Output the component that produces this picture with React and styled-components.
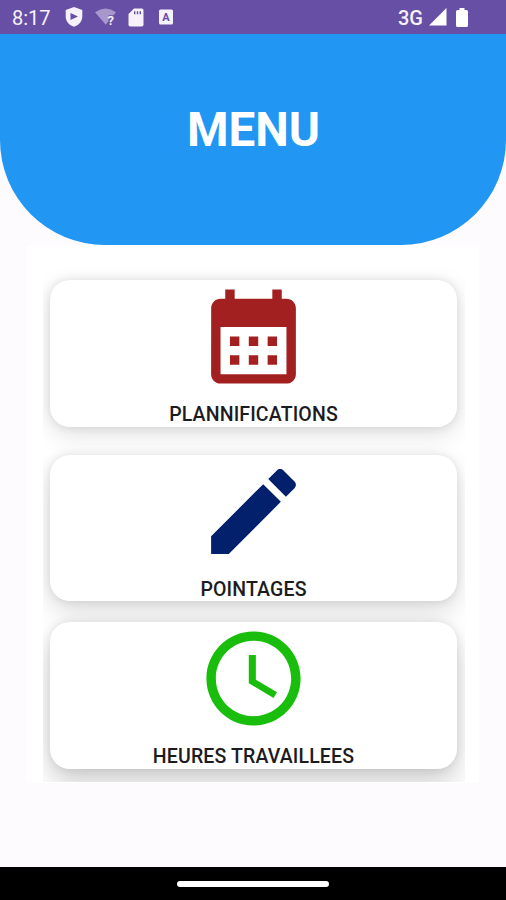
import { createGlobalStyle, styled } from "styled-components";

const GlobalStyle = createGlobalStyle`
    * {
        box-sizing: border-box;
    }
    body {
        margin: 0;
        background: #fefbff;
        font-family: Roboto, "Liberation Sans", sans-serif;
    }
`

const Screen = styled.div`
    display: flex;
    flex-direction: column;
    width: 506px;
    height: 900px;
    overflow: hidden;
    background: #fefbff;
`

const StatusBar = styled.div`
    display: flex;
    align-items: center;
    justify-content: space-between;
    flex: none;
    height: 34px;
    padding: 0 38px 0 12px;
    background: #674fa5;
    color: #f6f2fb;
`

const StatusGroup = styled.div`
    display: flex;
    align-items: center;
`

const StatusText = styled.span`
    font-size: 20px;
    font-weight: ${({ $weight }) => $weight || 400};
    line-height: 34px;
    padding-top: 2px;
`

const StatusIcon = styled.svg`
    display: block;
    flex: none;
    margin-left: ${({ $gap }) => $gap}px;
`

const Glyph = styled.text`
    font-family: Roboto, "Liberation Sans", sans-serif;
    font-weight: 700;
    font-size: ${({ $size }) => $size}px;
    text-anchor: middle;
`

const Header = styled.header`
    display: flex;
    justify-content: center;
    flex: none;
    height: 211px;
    padding-top: 68px;
    background: #2196f3;
    border-radius: 0 0 105px 105px;
`

const Title = styled.h1`
    margin: 0 0 0 1px;
    color: #fff;
    font-size: 47.5px;
    font-weight: 700;
    line-height: 56px;
`

const Panel = styled.main`
    flex: none;
    height: 538px;
    margin: 0 27px;
    padding: 0 14px 0 16px;
    background: #fff;
`

const CardList = styled.div`
    display: flex;
    flex-direction: column;
    height: 537px;
    padding: 35px 8px 0 7px;
    overflow: hidden;
`

const Card = styled.div`
    display: flex;
    flex-direction: column;
    align-items: center;
    flex: none;
    height: 146.5px;
    margin-bottom: ${({ $space }) => $space || 0}px;
    border-radius: 20px;
    background: #fff;
    box-shadow:
        0 0 10px rgba(0, 0, 0, 0.1),
        0 ${({ $drop }) => $drop}px ${({ $blur }) => $blur}px rgba(0, 0, 0, ${({ $shade }) => $shade});
`

const CardIcon = styled.svg`
    display: block;
    flex: none;
    width: 113px;
    height: 113px;
`

const Label = styled.span`
    margin-top: 10px;
    color: #1c1b20;
    font-size: 19.5px;
    font-weight: 500;
    line-height: 24px;
    letter-spacing: 0.15px;
    white-space: nowrap;
`

const NavBar = styled.footer`
    display: flex;
    justify-content: center;
    align-items: center;
    height: 33px;
    margin-top: auto;
    background: #000;
`

const Handle = styled.div`
    width: 152px;
    height: 6px;
    border-radius: 3px;
    background: #fff;
`

const items = [
    {
        label: "PLANNIFICATIONS",
        color: "#a32020",
        path: "M19 4h-1V2h-2v2H8V2H6v2H5c-1.11 0-1.99.9-1.99 2L3 20c0 1.1.89 2 2 2h14c1.1 0 2-.9 2-2V6c0-1.1-.9-2-2-2zm0 16H5V10h14v10zM9 14H7v-2h2v2zm4 0h-2v-2h2v2zm4 0h-2v-2h2v2zm-8 4H7v-2h2v2zm4 0h-2v-2h2v2zm4 0h-2v-2h2v2z",
        space: 28,
        drop: 7,
        blur: 24,
        shade: 0.13,
    },
    {
        label: "POINTAGES",
        color: "#03206c",
        path: "M3 17.25V21h3.75L17.81 9.94l-3.75-3.75L3 17.25zM20.71 7.04c.39-.39.39-1.02 0-1.41l-2.34-2.34c-.39-.39-1.02-.39-1.41 0l-1.83 1.83 3.75 3.75 1.83-1.83z",
        space: 21,
        drop: 11,
        blur: 26,
        shade: 0.14,
    },
    {
        label: "HEURES TRAVAILLEES",
        color: "#19bd0c",
        path: "M11.99 2C6.47 2 2 6.48 2 12s4.47 10 9.99 10C17.52 22 22 17.52 22 12S17.52 2 11.99 2zM12 20c-4.42 0-8-3.58-8-8s3.58-8 8-8 8 3.58 8 8-3.58 8-8 8zm.5-13H11v6l5.25 3.15.75-1.23-4.5-2.67z",
        space: 0,
        drop: 15,
        blur: 28,
        shade: 0.19,
    },
]

function Status() {
    return (
        <StatusBar>
            <StatusGroup>
                <StatusText>8:17</StatusText>
                <StatusIcon $gap={14} width="18" height="20" viewBox="0 0 18 20" fill="currentColor">
                    <path fillRule="evenodd" d="M9 0L17.3 3V9.5C17.3 14.5 13.6 18.2 9 19.7 4.4 18.2.7 14.5.7 9.5V3ZM5.5 6V13L13 9.5Z" />
                </StatusIcon>
                <StatusIcon $gap={12} width="23" height="20" viewBox="0 0 23 20" fill="currentColor">
                    <path opacity=".45" d="M0 5.2Q10.5-2.2 21 5.2L18.5 8.2H13.5V14L10.8 17.8Z" />
                    <Glyph x="15.8" y="18" $size={13}>?</Glyph>
                </StatusIcon>
                <StatusIcon $gap={10} width="16" height="19" viewBox="0 0 16 19" fill="currentColor">
                    <path fillRule="evenodd" d="M6 .5H13.8Q15.5.5 15.5 2.2V16.8Q15.5 18.5 13.8 18.5H2.2Q.5 18.5.5 16.8V6ZM6 3.2V6.2H7.4V3.2ZM8.8 3.2V6.2H10.2V3.2ZM11.6 3.2V6.2H13V3.2Z" />
                </StatusIcon>
                <StatusIcon $gap={15} width="14" height="16" viewBox="0 0 14 16" fill="currentColor">
                    <rect y=".5" width="14" height="15" rx="1.5" />
                    <Glyph x="7" y="12" $size={11} fill="#674fa5">A</Glyph>
                </StatusIcon>
            </StatusGroup>
            <StatusGroup>
                <StatusText $weight={500}>3G</StatusText>
                <StatusIcon $gap={6} width="18" height="18" viewBox="0 0 18 18" fill="#fff">
                    <path d="M17.5 0V17.5H0Z" />
                </StatusIcon>
                <StatusIcon $gap={9} width="12" height="19" viewBox="0 0 12 19" fill="#fff">
                    <path d="M3.5 0H8.5V2H10.5Q12 2 12 3.5V17.5Q12 19 10.5 19H1.5Q0 19 0 17.5V3.5Q0 2 1.5 2H3.5Z" />
                </StatusIcon>
            </StatusGroup>
        </StatusBar>
    )
}

function MenuCard({ item }) {
    return (
        <Card $space={item.space} $drop={item.drop} $blur={item.blur} $shade={item.shade}>
            <CardIcon viewBox="0 0 24 24" fill={item.color}>
                <path d={item.path} />
            </CardIcon>
            <Label>{item.label}</Label>
        </Card>
    )
}

function App() {
    return (
        <Screen>
            <GlobalStyle />
            <Status />
            <Header>
                <Title>MENU</Title>
            </Header>
            <Panel>
                <CardList>
                    {items.map((item) => (
                        <MenuCard key={item.label} item={item} />
                    ))}
                </CardList>
            </Panel>
            <NavBar>
                <Handle />
            </NavBar>
        </Screen>
    )
}

export default App
